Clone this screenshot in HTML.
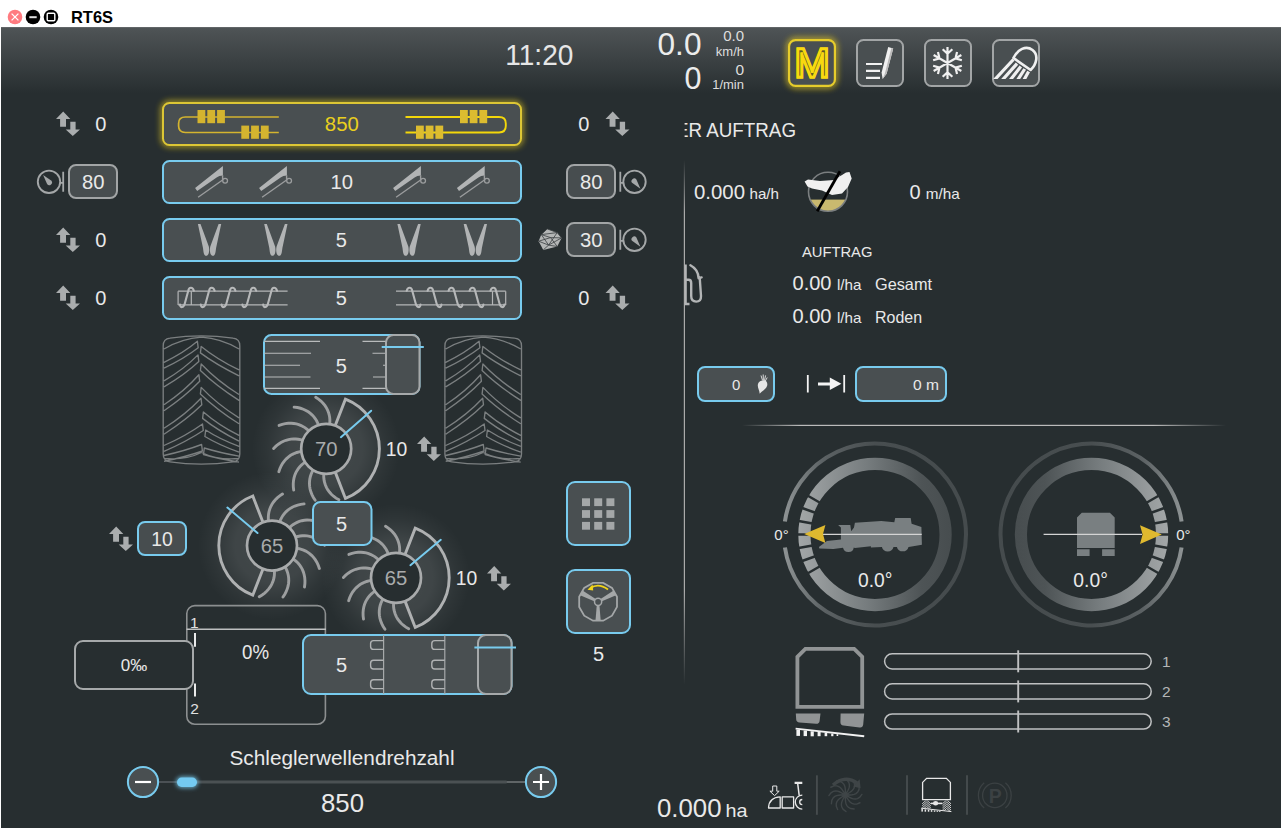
<!DOCTYPE html>
<html lang="de"><head><meta charset="utf-8"><title>RT6S</title>
<style>
html,body{margin:0;padding:0;background:#fff;overflow:hidden}
body{width:1282px;height:829px;position:relative;font-family:"Liberation Sans", sans-serif}
svg{position:absolute;left:0;top:0;display:block}
text{font-family:"Liberation Sans", sans-serif}
</style></head><body>
<svg width="1282" height="829" viewBox="0 0 1282 829">
<defs>
<linearGradient id="hdr" x1="0" y1="0" x2="0" y2="1"><stop offset="0" stop-color="#4f5456"/><stop offset="1" stop-color="#272e30"/></linearGradient>
<filter id="glowY" x="-30%" y="-60%" width="160%" height="220%"><feGaussianBlur stdDeviation="3"/></filter>
<filter id="glowB" x="-40%" y="-80%" width="180%" height="260%"><feGaussianBlur stdDeviation="2"/></filter>
<radialGradient id="tglow"><stop offset="0" stop-color="#fff" stop-opacity="0.13"/><stop offset="0.5" stop-color="#fff" stop-opacity="0.11"/><stop offset="0.8" stop-color="#fff" stop-opacity="0.035"/><stop offset="1" stop-color="#fff" stop-opacity="0"/></radialGradient>
<linearGradient id="vsep" x1="0" y1="0" x2="0" y2="1"><stop offset="0" stop-color="#aaa" stop-opacity="0"/><stop offset="0.1" stop-color="#aaa" stop-opacity="1"/><stop offset="0.82" stop-color="#aaa" stop-opacity="1"/><stop offset="1" stop-color="#aaa" stop-opacity="0"/></linearGradient>
<linearGradient id="hsep" x1="0" y1="0" x2="1" y2="0"><stop offset="0" stop-color="#bbb" stop-opacity="0"/><stop offset="0.12" stop-color="#bbb" stop-opacity="1"/><stop offset="0.85" stop-color="#bbb" stop-opacity="1"/><stop offset="1" stop-color="#bbb" stop-opacity="0"/></linearGradient>
</defs>

<rect x="0" y="0" width="1282" height="829" fill="#fff"/>
<rect x="1" y="27.4" width="1280" height="800.6" fill="#272e30"/>
<rect x="1" y="27.4" width="1280" height="66" fill="url(#hdr)"/>
<circle cx="15" cy="17" r="7.3" fill="#ff7b80"/><path d="M11.6 13.6 L18.4 20.4 M18.4 13.6 L11.6 20.4" stroke="#fff" stroke-width="1.3"/>
<circle cx="33" cy="17" r="7.3" fill="#000"/><rect x="29.3" y="16.2" width="7.4" height="2" fill="#ddd"/>
<circle cx="51" cy="17" r="7.3" fill="#000"/><rect x="47.2" y="13.2" width="7.6" height="7.6" rx="1" fill="none" stroke="#fff" stroke-width="1.4"/>
<text x="71" y="23.3" font-size="16.5" text-anchor="start" fill="#000" font-weight="bold" textLength="42" lengthAdjust="spacingAndGlyphs">RT6S</text>
<text x="539.3" y="65.3" font-size="29.3" text-anchor="middle" fill="#e6e6e6" textLength="68" lengthAdjust="spacingAndGlyphs">11:20</text>
<text x="701.5" y="55.3" font-size="30.5" text-anchor="end" fill="#ececec" textLength="44" lengthAdjust="spacingAndGlyphs">0.0</text>
<text x="701.5" y="88.8" font-size="30.5" text-anchor="end" fill="#ececec">0</text>
<text x="744" y="40.8" font-size="15" text-anchor="end" fill="#dedede">0.0</text>
<text x="744" y="55.6" font-size="13" text-anchor="end" fill="#dedede">km/h</text>
<text x="744" y="74.8" font-size="15.5" text-anchor="end" fill="#dedede">0</text>
<text x="744" y="89.2" font-size="13" text-anchor="end" fill="#dedede">1/min</text>
<rect x="789.1" y="40.1" width="45.8" height="45.8" rx="6.5" fill="none" stroke="#f2d21c" stroke-width="4" filter="url(#glowY)" opacity="0.9"/>
<rect x="789.1" y="40.1" width="45.8" height="45.8" rx="6.5" fill="#494f51" stroke="#e6cc2c" stroke-width="2.2"/>
<g transform="translate(812.1,77.3) scale(1.04,1)"><text x="0" y="0" font-size="40.5" text-anchor="middle" fill="#f7d90f" stroke="#f7d90f" stroke-width="3.3" stroke-linejoin="miter">M</text><text x="0" y="0" font-size="40.5" text-anchor="middle" fill="#5e5a22" stroke="#f7d90f" stroke-width="2.3" stroke-linejoin="miter">M</text></g>
<rect x="857.0" y="40.0" width="46" height="46" rx="6.5" fill="#494f51" stroke="#a2a5a6" stroke-width="2"/>
<rect x="925.0" y="40.0" width="46" height="46" rx="6.5" fill="#494f51" stroke="#a2a5a6" stroke-width="2"/>
<rect x="993.0" y="40.0" width="46" height="46" rx="6.5" fill="#494f51" stroke="#a2a5a6" stroke-width="2"/>
<path d="M866 64 H882 M866 70.9 H880 M866 77.9 H880" stroke="#f2f2f2" stroke-width="2.1"/>
<path d="M888.2 47 L893.2 48.4 L886.6 73.8 L882.6 79 L881.6 72.6 Z" fill="#f0f0f0"/>
<path d="M891.4 47.9 L893.2 48.4 L886.6 73.8 L882.6 79 L885 72.9 Z" fill="#b9b9b9"/>
<path d="M947.5 63.0 L947.50 47.00 M947.50 53.70 L942.67 49.20 M947.50 53.70 L952.33 49.20 M947.5 63.0 L961.36 55.00 M955.55 58.35 L957.04 51.92 M955.55 58.35 L961.87 60.28 M947.5 63.0 L961.36 71.00 M955.55 67.65 L961.87 65.72 M955.55 67.65 L957.04 74.08 M947.5 63.0 L947.50 79.00 M947.50 72.30 L952.33 76.80 M947.50 72.30 L942.67 76.80 M947.5 63.0 L933.64 71.00 M939.45 67.65 L937.96 74.08 M939.45 67.65 L933.13 65.72 M947.5 63.0 L933.64 55.00 M939.45 58.35 L933.13 60.28 M939.45 58.35 L937.96 51.92" stroke="#f0f0f0" stroke-width="2.2" fill="none"/>
<clipPath id="lampclip"><rect x="990" y="40" width="50" height="39"/></clipPath>
<g clip-path="url(#lampclip)" stroke="#f0f0f0" fill="none"><path d="M1013.4 58 L1030.6 70 C1036.5 64.5 1039 55 1032.5 50 C1026 45 1017.5 49.5 1013.4 58 Z" stroke-width="2.6" stroke-linejoin="round"/><path d="M1013.4 59.5 L993.5 81 M1017 63.6 L1001.5 81 M1020.8 66.4 L1009.5 81 M1024.7 69 L1017 81 M1028.6 71.6 L1023.4 81" stroke-width="3.2"/></g>
<rect x="163.2" y="103.2" width="357.6" height="41.6" rx="6" fill="none" stroke="#f2d21c" stroke-width="4" filter="url(#glowY)" opacity="0.85"/>
<rect x="163.0" y="103.0" width="358" height="42" rx="6.5" fill="#494f51" stroke="#dcc635" stroke-width="2"/>
<rect x="163.0" y="161.0" width="358" height="42" rx="6.5" fill="#494f51" stroke="#78cbee" stroke-width="2"/>
<rect x="163.0" y="219.0" width="358" height="42" rx="6.5" fill="#494f51" stroke="#78cbee" stroke-width="2"/>
<rect x="163.0" y="277.0" width="358" height="42" rx="6.5" fill="#494f51" stroke="#78cbee" stroke-width="2"/>
<path d="M278.8 117 H185.4 Q178.6 117 178.6 123.4 V126.1 Q178.6 132.5 185.4 132.5 H278.8" fill="none" stroke="#d4b42f" stroke-width="1.7"/>
<rect x="197.5" y="110" width="7.8" height="13.2" fill="#d4b42f"/>
<rect x="207.3" y="110" width="7.8" height="13.2" fill="#d4b42f"/>
<rect x="217.1" y="110" width="7.8" height="13.2" fill="#d4b42f"/>
<rect x="241.3" y="125.6" width="7.8" height="13.2" fill="#d4b42f"/>
<rect x="251.1" y="125.6" width="7.8" height="13.2" fill="#d4b42f"/>
<rect x="260.9" y="125.6" width="7.8" height="13.2" fill="#d4b42f"/>
<path d="M405.5 117 H499 Q505.8 117 505.8 123.4 V126.1 Q505.8 132.5 499 132.5 H405.5" fill="none" stroke="#f3d70a" stroke-width="1.9"/>
<rect x="460" y="110" width="7.8" height="13.2" fill="#dcbc30"/>
<rect x="469.7" y="110" width="7.8" height="13.2" fill="#dcbc30"/>
<rect x="479.4" y="110" width="7.8" height="13.2" fill="#dcbc30"/>
<rect x="416" y="125.6" width="7.8" height="13.2" fill="#dcbc30"/>
<rect x="425.7" y="125.6" width="7.8" height="13.2" fill="#dcbc30"/>
<rect x="435.4" y="125.6" width="7.8" height="13.2" fill="#dcbc30"/>
<text x="341.8" y="131" font-size="20" text-anchor="middle" fill="#e9cf1e" textLength="34" lengthAdjust="spacingAndGlyphs">850</text>
<g transform="translate(195,166.2)"><path d="M0.1 21.9 L27.9 -0.1 V9.3 Q24 9.6 21.6 11.2 L2.2 24.9 Z" fill="#b2b4b5"/><path d="M3.1 31.1 L27.6 13.8 M27.6 9 V13.6" stroke="#9b9d9e" stroke-width="1.4" fill="none"/><circle cx="30.1" cy="14.6" r="2.4" fill="none" stroke="#9b9d9e" stroke-width="1.3"/></g>
<g transform="translate(259,166.2)"><path d="M0.1 21.9 L27.9 -0.1 V9.3 Q24 9.6 21.6 11.2 L2.2 24.9 Z" fill="#b2b4b5"/><path d="M3.1 31.1 L27.6 13.8 M27.6 9 V13.6" stroke="#9b9d9e" stroke-width="1.4" fill="none"/><circle cx="30.1" cy="14.6" r="2.4" fill="none" stroke="#9b9d9e" stroke-width="1.3"/></g>
<g transform="translate(393,166.2)"><path d="M0.1 21.9 L27.9 -0.1 V9.3 Q24 9.6 21.6 11.2 L2.2 24.9 Z" fill="#b2b4b5"/><path d="M3.1 31.1 L27.6 13.8 M27.6 9 V13.6" stroke="#9b9d9e" stroke-width="1.4" fill="none"/><circle cx="30.1" cy="14.6" r="2.4" fill="none" stroke="#9b9d9e" stroke-width="1.3"/></g>
<g transform="translate(456.8,166.2)"><path d="M0.1 21.9 L27.9 -0.1 V9.3 Q24 9.6 21.6 11.2 L2.2 24.9 Z" fill="#b2b4b5"/><path d="M3.1 31.1 L27.6 13.8 M27.6 9 V13.6" stroke="#9b9d9e" stroke-width="1.4" fill="none"/><circle cx="30.1" cy="14.6" r="2.4" fill="none" stroke="#9b9d9e" stroke-width="1.3"/></g>
<text x="341.8" y="189" font-size="20" text-anchor="middle" fill="#e9e9e9" textLength="22.5" lengthAdjust="spacingAndGlyphs">10</text>
<g transform="translate(197.9,224)" fill="#b2b4b5"><path d="M0 0 L2.6 0 L10.9 22.5 C11.7 25.5 11.5 31.8 8.2 31.8 C5.6 31.8 5.6 27 5.1 24 Z"/><path d="M23.3 0 L20.7 0 L12.4 22.5 C11.6 25.5 11.8 31.8 15.1 31.8 C17.7 31.8 17.7 27 18.2 24 Z"/></g>
<g transform="translate(264.2,224)" fill="#b2b4b5"><path d="M0 0 L2.6 0 L10.9 22.5 C11.7 25.5 11.5 31.8 8.2 31.8 C5.6 31.8 5.6 27 5.1 24 Z"/><path d="M23.3 0 L20.7 0 L12.4 22.5 C11.6 25.5 11.8 31.8 15.1 31.8 C17.7 31.8 17.7 27 18.2 24 Z"/></g>
<g transform="translate(397.4,224)" fill="#b2b4b5"><path d="M0 0 L2.6 0 L10.9 22.5 C11.7 25.5 11.5 31.8 8.2 31.8 C5.6 31.8 5.6 27 5.1 24 Z"/><path d="M23.3 0 L20.7 0 L12.4 22.5 C11.6 25.5 11.8 31.8 15.1 31.8 C17.7 31.8 17.7 27 18.2 24 Z"/></g>
<g transform="translate(463.7,224)" fill="#b2b4b5"><path d="M0 0 L2.6 0 L10.9 22.5 C11.7 25.5 11.5 31.8 8.2 31.8 C5.6 31.8 5.6 27 5.1 24 Z"/><path d="M23.3 0 L20.7 0 L12.4 22.5 C11.6 25.5 11.8 31.8 15.1 31.8 C17.7 31.8 17.7 27 18.2 24 Z"/></g>
<text x="341.3" y="247" font-size="20" text-anchor="middle" fill="#e9e9e9">5</text>
<text x="341.3" y="305" font-size="20" text-anchor="middle" fill="#e9e9e9">5</text>
<path d="M178.1 291.2 H287.6 M178.1 304.9 H287.6" stroke="#b4b6b7" stroke-width="1.2" fill="none"/>
<path d="M178.1 291.2 V304.9 M191.3 291.2 V304.9" stroke="#b4b6b7" stroke-width="1.2"/>
<path d="M396 291.2 H505.7 M396 304.9 H505.7" stroke="#b4b6b7" stroke-width="1.2" fill="none"/>
<path d="M505.7 291.2 V304.9 M492.5 291.2 V304.9" stroke="#b4b6b7" stroke-width="1.2"/>
<path d="M180.0 304.6 C180.3 308.2 183.6 308 184.8 303.5 L188.2 291 C189.0 287 192.6 286.6 193.8 290.8 M200.8 304.6 C201.1 308.2 204.4 308 205.6 303.5 L209.0 291 C209.8 287 213.4 286.6 214.6 290.8 M221.6 304.6 C221.9 308.2 225.2 308 226.4 303.5 L229.8 291 C230.6 287 234.2 286.6 235.4 290.8 M242.4 304.6 C242.7 308.2 246.0 308 247.2 303.5 L250.6 291 C251.4 287 255.0 286.6 256.2 290.8 M263.2 304.6 C263.5 308.2 266.8 308 268.0 303.5 L271.4 291 C272.2 287 275.8 286.6 277.0 290.8 M504.3 304.6 C504.0 308.2 500.7 308 499.5 303.5 L496.1 291 C495.3 287 491.7 286.6 490.5 290.8 M483.4 304.6 C483.1 308.2 479.8 308 478.6 303.5 L475.2 291 C474.4 287 470.8 286.6 469.6 290.8 M462.4 304.6 C462.1 308.2 458.8 308 457.6 303.5 L454.2 291 C453.4 287 449.8 286.6 448.6 290.8 M441.4 304.6 C441.1 308.2 437.8 308 436.6 303.5 L433.2 291 C432.4 287 428.8 286.6 427.6 290.8 M420.5 304.6 C420.2 308.2 416.9 308 415.7 303.5 L412.3 291 C411.5 287 407.9 286.6 406.7 290.8" stroke="#b6b8b9" stroke-width="2.1" fill="none" stroke-linecap="round"/>
<path transform="translate(56,111.6)" fill="#aaadae" d="M7.2 0 L14.3 7.4 H10 V15.2 H4.1 V7.4 H0 Z M14.3 10.2 H19.6 V17.8 H24 L16.8 24.4 L9.7 17.8 H14.3 Z"/>
<text x="100.7" y="131" font-size="20" text-anchor="middle" fill="#e9e9e9">0</text>
<path transform="translate(56,227.6)" fill="#aaadae" d="M7.2 0 L14.3 7.4 H10 V15.2 H4.1 V7.4 H0 Z M14.3 10.2 H19.6 V17.8 H24 L16.8 24.4 L9.7 17.8 H14.3 Z"/>
<text x="100.7" y="247" font-size="20" text-anchor="middle" fill="#e9e9e9">0</text>
<path transform="translate(56,285.6)" fill="#aaadae" d="M7.2 0 L14.3 7.4 H10 V15.2 H4.1 V7.4 H0 Z M14.3 10.2 H19.6 V17.8 H24 L16.8 24.4 L9.7 17.8 H14.3 Z"/>
<text x="100.7" y="305" font-size="20" text-anchor="middle" fill="#e9e9e9">0</text>
<text x="583.7" y="131" font-size="20" text-anchor="middle" fill="#e9e9e9">0</text>
<path transform="translate(605.5,111.6)" fill="#aaadae" d="M7.2 0 L14.3 7.4 H10 V15.2 H4.1 V7.4 H0 Z M14.3 10.2 H19.6 V17.8 H24 L16.8 24.4 L9.7 17.8 H14.3 Z"/>
<text x="583.7" y="305" font-size="20" text-anchor="middle" fill="#e9e9e9">0</text>
<path transform="translate(605.5,285.6)" fill="#aaadae" d="M7.2 0 L14.3 7.4 H10 V15.2 H4.1 V7.4 H0 Z M14.3 10.2 H19.6 V17.8 H24 L16.8 24.4 L9.7 17.8 H14.3 Z"/>
<circle cx="49" cy="181.8" r="11.2" fill="none" stroke="#a4a7a8" stroke-width="1.9"/>
<path d="M43.1 174.9 L51.1 180.5 A2.7 2.7 0 1 1 47.1 184.10000000000002 Z" fill="#a4a7a8"/>
<path d="M63.2 171.8 V191.8 M60.5 182.8 H63.2" stroke="#a4a7a8" stroke-width="1.8" fill="none"/>
<rect x="69.0" y="165.0" width="48" height="33" rx="7" fill="#474d4f" stroke="#a2a5a6" stroke-width="2"/>
<text x="93.2" y="189" font-size="20" text-anchor="middle" fill="#e9e9e9" textLength="22.5" lengthAdjust="spacingAndGlyphs">80</text>
<rect x="567.0" y="165.0" width="48" height="33" rx="7" fill="#474d4f" stroke="#a2a5a6" stroke-width="2"/>
<text x="591.2" y="189" font-size="20" text-anchor="middle" fill="#e9e9e9" textLength="22.5" lengthAdjust="spacingAndGlyphs">80</text>
<circle cx="634.5" cy="181.8" r="11.2" fill="none" stroke="#a4a7a8" stroke-width="1.9"/>
<path d="M628.6 174.9 L636.6 180.5 A2.7 2.7 0 1 1 632.6 184.10000000000002 Z" fill="#a4a7a8" transform="rotate(180 634.5 181.8)"/>
<path d="M620.3 171.8 V191.8 M623.0 182.8 H620.3" stroke="#a4a7a8" stroke-width="1.8" fill="none"/>
<rect x="567.0" y="223.0" width="48" height="33" rx="7" fill="#474d4f" stroke="#a2a5a6" stroke-width="2"/>
<text x="591.2" y="247" font-size="20" text-anchor="middle" fill="#e9e9e9" textLength="22.5" lengthAdjust="spacingAndGlyphs">30</text>
<circle cx="634.5" cy="239.8" r="11.2" fill="none" stroke="#a4a7a8" stroke-width="1.9"/>
<path d="M628.6 232.9 L636.6 238.5 A2.7 2.7 0 1 1 632.6 242.10000000000002 Z" fill="#a4a7a8" transform="rotate(180 634.5 239.8)"/>
<path d="M620.3 229.8 V249.8 M623.0 240.8 H620.3" stroke="#a4a7a8" stroke-width="1.8" fill="none"/>
<g transform="translate(538.6,228.6)"><path d="M8.6 0.3 L18.6 4 L23 9.3 L18.6 17.9 L4.7 21.3 L0 12.6 L2.7 6 Z" fill="#b3b5b5"/><path d="M8.6 0.3 L2.7 6 L18.6 4 L8.6 0.3 M2.7 6 L10 16.5 L18.6 4 L23 9.3 L10 16.5 L4.7 21.3 M0 12.6 L10 16.5 L18.6 17.9 M2.7 6 L12 9 L18.6 17.9 M0 12.6 L12 9 L23 9.3" fill="none" stroke="#3a3f41" stroke-width="0.8"/></g>
<path transform="translate(0,0)" d="M163.2 346 C163.2 340 166 338.6 170 338.2 Q201 333.5 233 338.2 C237 338.6 239.8 340 239.8 346 V454 C239.8 460 237 461.4 233 461.8 Q201 466.5 170 461.8 C166 461.4 163.2 460 163.2 454 Z M164 349 Q182 338.5 201.5 337.2 Q221 338.5 239 349 M164 458.5 Q185 460.5 201.5 452.5 Q218 460.5 239 458.5 M164 362.3 Q183.7 352.9 197.4 341.3 L198.2 347.8 Q184.7 358.3 164 368.2 M164 380.9 Q184.0 369.2 198.0 354.9 L198.8 361.4 Q185.0 374.4 164 386.8 M164 404.8 Q184.4 391.3 198.9 374.8 L199.7 381.3 Q185.4 396.3 164 410.7 M164 428.3 Q185.5 414.8 201.0 398.3 L201.8 404.8 Q186.5 419.8 164 434.2 M164 445.5 Q186.2 435.8 202.5 424.0 L203.3 430.5 Q187.2 441.2 164 451.4 M164 455.5 Q185.8 450.6 201.6 444.5 L202.4 451.0 Q186.8 456.5 164 461.4 M239 369.9 Q217.1 359.3 201.2 346.4 L200.4 352.9 Q216.1 364.6 239 375.8 M239 394.5 Q217.1 380.8 201.2 364.0 L200.4 370.5 Q216.1 385.8 239 400.4 M239 417.9 Q217.1 404.2 201.2 387.4 L200.4 393.9 Q216.1 409.1 239 423.8 M239 435.4 Q218.2 424.8 203.4 411.9 L202.6 418.4 Q217.2 430.1 239 441.2 M239 446.3 Q219.3 439.0 205.7 430.0 L204.9 436.5 Q218.3 444.6 239 452.2 M239 456.2 Q218.7 452.5 204.3 448.0 L203.5 454.5 Q217.7 458.6 239 462.1" fill="none" stroke="#7b7f80" stroke-width="1.35" stroke-linejoin="round"/>
<path transform="translate(281.7,0)" d="M163.2 346 C163.2 340 166 338.6 170 338.2 Q201 333.5 233 338.2 C237 338.6 239.8 340 239.8 346 V454 C239.8 460 237 461.4 233 461.8 Q201 466.5 170 461.8 C166 461.4 163.2 460 163.2 454 Z M164 349 Q182 338.5 201.5 337.2 Q221 338.5 239 349 M164 458.5 Q185 460.5 201.5 452.5 Q218 460.5 239 458.5 M164 362.3 Q183.7 352.9 197.4 341.3 L198.2 347.8 Q184.7 358.3 164 368.2 M164 380.9 Q184.0 369.2 198.0 354.9 L198.8 361.4 Q185.0 374.4 164 386.8 M164 404.8 Q184.4 391.3 198.9 374.8 L199.7 381.3 Q185.4 396.3 164 410.7 M164 428.3 Q185.5 414.8 201.0 398.3 L201.8 404.8 Q186.5 419.8 164 434.2 M164 445.5 Q186.2 435.8 202.5 424.0 L203.3 430.5 Q187.2 441.2 164 451.4 M164 455.5 Q185.8 450.6 201.6 444.5 L202.4 451.0 Q186.8 456.5 164 461.4 M239 369.9 Q217.1 359.3 201.2 346.4 L200.4 352.9 Q216.1 364.6 239 375.8 M239 394.5 Q217.1 380.8 201.2 364.0 L200.4 370.5 Q216.1 385.8 239 400.4 M239 417.9 Q217.1 404.2 201.2 387.4 L200.4 393.9 Q216.1 409.1 239 423.8 M239 435.4 Q218.2 424.8 203.4 411.9 L202.6 418.4 Q217.2 430.1 239 441.2 M239 446.3 Q219.3 439.0 205.7 430.0 L204.9 436.5 Q218.3 444.6 239 452.2 M239 456.2 Q218.7 452.5 204.3 448.0 L203.5 454.5 Q217.7 458.6 239 462.1" fill="none" stroke="#7b7f80" stroke-width="1.35" stroke-linejoin="round"/>
<circle cx="326" cy="448.5" r="74" fill="url(#tglow)"/>
<circle cx="272" cy="545.6" r="74" fill="url(#tglow)"/>
<circle cx="396" cy="577.8" r="74" fill="url(#tglow)"/>
<rect x="264.0" y="335.0" width="155.5" height="59" rx="7.5" fill="#494f51" stroke="#78cbee" stroke-width="2"/>
<path d="M264 341.4 H320 M362.5 341.4 H386 M264 353.3 H311 M372.5 353.3 H386 M264 365.2 H300 M383 365.2 H386 M264 377 H310.5 M373 377 H386 M264 388.4 H320 M362.5 388.4 H386" stroke="#b9bbbc" stroke-width="1.1"/>
<rect x="386.0" y="335.0" width="33.5" height="59" rx="7.5" fill="#494f51" stroke="#a6a9aa" stroke-width="2"/>
<path d="M381.7 347 H423.8" stroke="#78cbee" stroke-width="1.8"/>
<text x="341.3" y="373" font-size="20" text-anchor="middle" fill="#e9e9e9">5</text>
<g transform="translate(326.2,448.8)" fill="none" stroke="#a9abac" stroke-linecap="round" stroke-linejoin="miter"><path d="M3.48 -24.76 L3.66 -27.05 L3.64 -29.37 L3.42 -31.72 L2.97 -34.07 L2.29 -36.43 L1.35 -38.78 L0.14 -41.10 L-1.35 -43.38 L-3.15 -45.59 L-5.27 -47.71 L-7.71 -49.71 L-10.49 -51.54 M-7.75 -23.77 L-8.60 -25.91 L-9.64 -27.99 L-10.87 -29.99 L-12.30 -31.91 L-13.95 -33.73 L-15.83 -35.43 L-17.93 -36.98 L-20.28 -38.37 L-22.87 -39.57 L-25.70 -40.54 L-28.77 -41.26 L-32.07 -41.69 M-17.41 -17.94 L-19.11 -19.50 L-20.95 -20.91 L-22.94 -22.16 L-25.07 -23.26 L-27.35 -24.17 L-29.78 -24.87 L-32.36 -25.34 L-35.08 -25.55 L-37.93 -25.49 L-40.90 -25.12 L-43.98 -24.42 L-47.13 -23.35 M-23.52 -8.46 L-25.73 -9.12 L-28.01 -9.57 L-30.35 -9.83 L-32.74 -9.87 L-35.19 -9.69 L-37.68 -9.25 L-40.20 -8.54 L-42.74 -7.54 L-45.27 -6.23 L-47.78 -4.59 L-50.23 -2.61 L-52.60 -0.27 M-24.85 2.73 L-27.12 3.12 L-29.37 3.71 L-31.58 4.51 L-33.75 5.52 L-35.87 6.77 L-37.91 8.25 L-39.87 10.00 L-41.70 12.01 L-43.40 14.30 L-44.94 16.88 L-46.27 19.73 L-47.36 22.88 M-21.12 13.38 L-22.99 14.72 L-24.75 16.24 L-26.38 17.93 L-27.89 19.79 L-29.24 21.84 L-30.43 24.07 L-31.42 26.50 L-32.18 29.12 L-32.70 31.92 L-32.95 34.91 L-32.89 38.06 L-32.49 41.36 M-13.09 21.30 L-14.18 23.33 L-15.09 25.46 L-15.82 27.70 L-16.35 30.04 L-16.67 32.47 L-16.75 35.00 L-16.57 37.61 L-16.11 40.30 L-15.35 43.05 L-14.26 45.83 L-12.82 48.64 L-11.01 51.44 M-2.40 24.88 L-2.49 27.19 L-2.37 29.51 L-2.04 31.83 L-1.49 34.17 L-0.71 36.49 L0.33 38.80 L1.64 41.07 L3.24 43.28 L5.13 45.41 L7.34 47.44 L9.86 49.32 L12.72 51.04" stroke-width="2.9" stroke="#9d9fa0"/><path d="M9.04 -23.31 L19.24 -49.60 A53.2 53.2 0 0 1 19.24 49.60 L9.04 23.31" stroke-width="2.9" stroke="#afb1b2" stroke-linecap="butt"/><circle cx="0" cy="0" r="25" fill="#272e30" stroke-width="2.7"/><path d="M14.7 -11.6 L45 -38.1" stroke="#78cbee" stroke-width="2"/></g>
<text x="326.2" y="456.0" font-size="20" text-anchor="middle" fill="#a9abac" textLength="22.5" lengthAdjust="spacingAndGlyphs">70</text>
<g transform="translate(272,545.6) scale(-1,1)" fill="none" stroke="#a9abac" stroke-linecap="round" stroke-linejoin="miter"><path d="M3.48 -24.76 L3.66 -27.05 L3.64 -29.37 L3.42 -31.72 L2.97 -34.07 L2.29 -36.43 L1.35 -38.78 L0.14 -41.10 L-1.35 -43.38 L-3.15 -45.59 L-5.27 -47.71 L-7.71 -49.71 L-10.49 -51.54 M-7.75 -23.77 L-8.60 -25.91 L-9.64 -27.99 L-10.87 -29.99 L-12.30 -31.91 L-13.95 -33.73 L-15.83 -35.43 L-17.93 -36.98 L-20.28 -38.37 L-22.87 -39.57 L-25.70 -40.54 L-28.77 -41.26 L-32.07 -41.69 M-17.41 -17.94 L-19.11 -19.50 L-20.95 -20.91 L-22.94 -22.16 L-25.07 -23.26 L-27.35 -24.17 L-29.78 -24.87 L-32.36 -25.34 L-35.08 -25.55 L-37.93 -25.49 L-40.90 -25.12 L-43.98 -24.42 L-47.13 -23.35 M-23.52 -8.46 L-25.73 -9.12 L-28.01 -9.57 L-30.35 -9.83 L-32.74 -9.87 L-35.19 -9.69 L-37.68 -9.25 L-40.20 -8.54 L-42.74 -7.54 L-45.27 -6.23 L-47.78 -4.59 L-50.23 -2.61 L-52.60 -0.27 M-24.85 2.73 L-27.12 3.12 L-29.37 3.71 L-31.58 4.51 L-33.75 5.52 L-35.87 6.77 L-37.91 8.25 L-39.87 10.00 L-41.70 12.01 L-43.40 14.30 L-44.94 16.88 L-46.27 19.73 L-47.36 22.88 M-21.12 13.38 L-22.99 14.72 L-24.75 16.24 L-26.38 17.93 L-27.89 19.79 L-29.24 21.84 L-30.43 24.07 L-31.42 26.50 L-32.18 29.12 L-32.70 31.92 L-32.95 34.91 L-32.89 38.06 L-32.49 41.36 M-13.09 21.30 L-14.18 23.33 L-15.09 25.46 L-15.82 27.70 L-16.35 30.04 L-16.67 32.47 L-16.75 35.00 L-16.57 37.61 L-16.11 40.30 L-15.35 43.05 L-14.26 45.83 L-12.82 48.64 L-11.01 51.44 M-2.40 24.88 L-2.49 27.19 L-2.37 29.51 L-2.04 31.83 L-1.49 34.17 L-0.71 36.49 L0.33 38.80 L1.64 41.07 L3.24 43.28 L5.13 45.41 L7.34 47.44 L9.86 49.32 L12.72 51.04" stroke-width="2.9" stroke="#9d9fa0"/><path d="M9.04 -23.31 L19.24 -49.60 A53.2 53.2 0 0 1 19.24 49.60 L9.04 23.31" stroke-width="2.9" stroke="#afb1b2" stroke-linecap="butt"/><circle cx="0" cy="0" r="25" fill="#272e30" stroke-width="2.7"/><path d="M14.5 -12.6 L44.6 -38" stroke="#78cbee" stroke-width="2"/></g>
<text x="272" y="552.8000000000001" font-size="20" text-anchor="middle" fill="#a9abac" textLength="22.5" lengthAdjust="spacingAndGlyphs">65</text>
<g transform="translate(396,577.8)" fill="none" stroke="#a9abac" stroke-linecap="round" stroke-linejoin="miter"><path d="M3.48 -24.76 L3.66 -27.05 L3.64 -29.37 L3.42 -31.72 L2.97 -34.07 L2.29 -36.43 L1.35 -38.78 L0.14 -41.10 L-1.35 -43.38 L-3.15 -45.59 L-5.27 -47.71 L-7.71 -49.71 L-10.49 -51.54 M-7.75 -23.77 L-8.60 -25.91 L-9.64 -27.99 L-10.87 -29.99 L-12.30 -31.91 L-13.95 -33.73 L-15.83 -35.43 L-17.93 -36.98 L-20.28 -38.37 L-22.87 -39.57 L-25.70 -40.54 L-28.77 -41.26 L-32.07 -41.69 M-17.41 -17.94 L-19.11 -19.50 L-20.95 -20.91 L-22.94 -22.16 L-25.07 -23.26 L-27.35 -24.17 L-29.78 -24.87 L-32.36 -25.34 L-35.08 -25.55 L-37.93 -25.49 L-40.90 -25.12 L-43.98 -24.42 L-47.13 -23.35 M-23.52 -8.46 L-25.73 -9.12 L-28.01 -9.57 L-30.35 -9.83 L-32.74 -9.87 L-35.19 -9.69 L-37.68 -9.25 L-40.20 -8.54 L-42.74 -7.54 L-45.27 -6.23 L-47.78 -4.59 L-50.23 -2.61 L-52.60 -0.27 M-24.85 2.73 L-27.12 3.12 L-29.37 3.71 L-31.58 4.51 L-33.75 5.52 L-35.87 6.77 L-37.91 8.25 L-39.87 10.00 L-41.70 12.01 L-43.40 14.30 L-44.94 16.88 L-46.27 19.73 L-47.36 22.88 M-21.12 13.38 L-22.99 14.72 L-24.75 16.24 L-26.38 17.93 L-27.89 19.79 L-29.24 21.84 L-30.43 24.07 L-31.42 26.50 L-32.18 29.12 L-32.70 31.92 L-32.95 34.91 L-32.89 38.06 L-32.49 41.36 M-13.09 21.30 L-14.18 23.33 L-15.09 25.46 L-15.82 27.70 L-16.35 30.04 L-16.67 32.47 L-16.75 35.00 L-16.57 37.61 L-16.11 40.30 L-15.35 43.05 L-14.26 45.83 L-12.82 48.64 L-11.01 51.44 M-2.40 24.88 L-2.49 27.19 L-2.37 29.51 L-2.04 31.83 L-1.49 34.17 L-0.71 36.49 L0.33 38.80 L1.64 41.07 L3.24 43.28 L5.13 45.41 L7.34 47.44 L9.86 49.32 L12.72 51.04" stroke-width="2.9" stroke="#9d9fa0"/><path d="M9.04 -23.31 L19.24 -49.60 A53.2 53.2 0 0 1 19.24 49.60 L9.04 23.31" stroke-width="2.9" stroke="#afb1b2" stroke-linecap="butt"/><circle cx="0" cy="0" r="25" fill="#272e30" stroke-width="2.7"/><path d="M14.4 -12.6 L44.8 -38" stroke="#78cbee" stroke-width="2"/></g>
<text x="396" y="585.0" font-size="20" text-anchor="middle" fill="#a9abac" textLength="22.5" lengthAdjust="spacingAndGlyphs">65</text>
<text x="396.5" y="455.8" font-size="20" text-anchor="middle" fill="#e9e9e9" textLength="21.5" lengthAdjust="spacingAndGlyphs">10</text>
<path transform="translate(417,436.5)" fill="#aaadae" d="M7.2 0 L14.3 7.4 H10 V15.2 H4.1 V7.4 H0 Z M14.3 10.2 H19.6 V17.8 H24 L16.8 24.4 L9.7 17.8 H14.3 Z"/>
<text x="466.5" y="585.2" font-size="20" text-anchor="middle" fill="#e9e9e9" textLength="21.5" lengthAdjust="spacingAndGlyphs">10</text>
<path transform="translate(487,566)" fill="#aaadae" d="M7.2 0 L14.3 7.4 H10 V15.2 H4.1 V7.4 H0 Z M14.3 10.2 H19.6 V17.8 H24 L16.8 24.4 L9.7 17.8 H14.3 Z"/>
<path transform="translate(109,526.6)" fill="#aaadae" d="M7.2 0 L14.3 7.4 H10 V15.2 H4.1 V7.4 H0 Z M14.3 10.2 H19.6 V17.8 H24 L16.8 24.4 L9.7 17.8 H14.3 Z"/>
<rect x="138.0" y="522.0" width="48" height="33" rx="7" fill="#474d4f" stroke="#78cbee" stroke-width="2"/>
<text x="162" y="546" font-size="20" text-anchor="middle" fill="#e9e9e9" textLength="21.5" lengthAdjust="spacingAndGlyphs">10</text>
<rect x="313.0" y="502.0" width="58.5" height="43" rx="7.5" fill="#494f51" stroke="#78cbee" stroke-width="2"/>
<text x="341.5" y="531" font-size="20" text-anchor="middle" fill="#e9e9e9">5</text>
<rect x="567.0" y="482.0" width="63" height="63" rx="8" fill="#494f51" stroke="#78cbee" stroke-width="2"/>
<rect x="582.0" y="498.3" width="8" height="7.8" fill="#a4a7a8"/>
<rect x="582.0" y="510.1" width="8" height="7.8" fill="#a4a7a8"/>
<rect x="582.0" y="521.9" width="8" height="7.8" fill="#a4a7a8"/>
<rect x="594.2" y="498.3" width="8" height="7.8" fill="#a4a7a8"/>
<rect x="594.2" y="510.1" width="8" height="7.8" fill="#a4a7a8"/>
<rect x="594.2" y="521.9" width="8" height="7.8" fill="#a4a7a8"/>
<rect x="606.4" y="498.3" width="8" height="7.8" fill="#a4a7a8"/>
<rect x="606.4" y="510.1" width="8" height="7.8" fill="#a4a7a8"/>
<rect x="606.4" y="521.9" width="8" height="7.8" fill="#a4a7a8"/>
<rect x="567.0" y="570.0" width="63" height="63" rx="8" fill="#494f51" stroke="#78cbee" stroke-width="2"/>
<polygon points="617.0 606.9 612.0 615.7 603.2 620.7 593.0 620.7 584.2 615.7 579.2 606.9 579.2 596.7 584.2 587.9 593.0 582.9 603.2 582.9 612.0 587.9 617.0 596.7" fill="none" stroke="#a4a7a8" stroke-width="1.8"/>
<g transform="translate(598.1,601.8)" fill="#a4a7a8" stroke="none"><path d="M-1.3 3 L1.3 3 L2.6 19 L-2.6 19 Z"/><path d="M-1.3 3 L1.3 3 L2.6 19 L-2.6 19 Z" transform="rotate(118)"/><path d="M-1.3 3 L1.3 3 L2.6 19 L-2.6 19 Z" transform="rotate(-118)"/><circle cx="0" cy="0" r="3.6" fill="#494f51" stroke="#a4a7a8" stroke-width="1.5"/></g>
<path d="M608 589.5 Q598.5 582.5 590.5 588" fill="none" stroke="#f2d418" stroke-width="1.8"/><path d="M587.5 589.8 L592.6 584.6 L593.2 590.6 Z" fill="#f2d418"/>
<text x="598.6" y="661" font-size="20" text-anchor="middle" fill="#e9e9e9">5</text>
<rect x="186.8" y="605.6" width="138.6" height="118.6" rx="8" fill="none" stroke="#8c8f90" stroke-width="1.6"/>
<path d="M186.5 629.3 H326" stroke="#bdbfc0" stroke-width="1.6"/>
<text x="194.2" y="627.8" font-size="15.5" text-anchor="middle" fill="#e0e0e0">1</text>
<text x="194.6" y="714" font-size="15.5" text-anchor="middle" fill="#e0e0e0">2</text>
<path d="M195 633 V646.8 M195 683.4 V696.6" stroke="#fff" stroke-width="1.8"/>
<rect x="75.0" y="641.0" width="118" height="48" rx="8" fill="#272e30" stroke="#a6a9aa" stroke-width="2"/>
<text x="134" y="671.2" font-size="17" text-anchor="middle" fill="#e9e9e9">0‰</text>
<text x="255.6" y="659.4" font-size="20" text-anchor="middle" fill="#e9e9e9" textLength="27" lengthAdjust="spacingAndGlyphs">0%</text>
<rect x="303.0" y="635.0" width="208.5" height="59" rx="8" fill="#494f51" stroke="#78cbee" stroke-width="2"/>
<path d="M383.6 635 V694 M444.8 635 V694" stroke="#a6a9aa" stroke-width="1.2"/>
<path d="M383.6 640.6 H373.6 A3 3 0 0 0 370.6 643.6 V646.4 A3 3 0 0 0 373.6 649.4 H383.6 M383.6 660.2 H373.6 A3 3 0 0 0 370.6 663.2 V666.0 A3 3 0 0 0 373.6 669.0 H383.6 M383.6 679.8000000000001 H373.6 A3 3 0 0 0 370.6 682.8000000000001 V685.6 A3 3 0 0 0 373.6 688.6 H383.6 M444.8 640.6 H434.8 A3 3 0 0 0 431.8 643.6 V646.4 A3 3 0 0 0 434.8 649.4 H444.8 M444.8 660.2 H434.8 A3 3 0 0 0 431.8 663.2 V666.0 A3 3 0 0 0 434.8 669.0 H444.8 M444.8 679.8000000000001 H434.8 A3 3 0 0 0 431.8 682.8000000000001 V685.6 A3 3 0 0 0 434.8 688.6 H444.8" fill="none" stroke="#b0b2b3" stroke-width="1.4"/>
<rect x="478.0" y="635.0" width="33.5" height="59" rx="8" fill="#494f51" stroke="#a6a9aa" stroke-width="2"/>
<path d="M474.4 647.5 H516" stroke="#78cbee" stroke-width="1.8"/>
<text x="341.5" y="672.3" font-size="20" text-anchor="middle" fill="#e9e9e9">5</text>
<text x="342" y="765.2" font-size="20" text-anchor="middle" fill="#e9e9e9" textLength="225" lengthAdjust="spacingAndGlyphs">Schleglerwellendrehzahl</text>
<path d="M159 782 H178" stroke="#70757a" stroke-width="1"/>
<path d="M196 782 H506.6" stroke="#4b5153" stroke-width="3.2"/>
<path d="M506.6 782 H525" stroke="#9a9d9e" stroke-width="1"/>
<rect x="176" y="776.5" width="22" height="11.5" rx="5.7" fill="#78cbee" filter="url(#glowB)" opacity="0.8"/>
<rect x="177" y="777.6" width="20" height="9.4" rx="4.7" fill="#74caf1"/>
<circle cx="143" cy="782" r="15.1" fill="#494f51" stroke="#78cbee" stroke-width="2"/><path d="M135 782 H151" stroke="#fff" stroke-width="2.2"/>
<circle cx="541" cy="782" r="15.1" fill="#494f51" stroke="#78cbee" stroke-width="2"/><path d="M533 782 H549 M541 774 V790" stroke="#fff" stroke-width="2.2"/>
<text x="342.5" y="811.8" font-size="26" text-anchor="middle" fill="#e9e9e9" textLength="43" lengthAdjust="spacingAndGlyphs">850</text>
<rect x="683.8" y="160" width="1.2" height="525" fill="url(#vsep)"/>
<clipPath id="rclip"><rect x="684.6" y="100" width="600" height="700"/></clipPath>
<g clip-path="url(#rclip)">
<text x="796" y="137" font-size="19.6" text-anchor="end" fill="#e9e9e9" textLength="120" lengthAdjust="spacingAndGlyphs">ER AUFTRAG</text>
<path d="M685.6 264.6 V304.6 M684 304 H689.5" stroke="#b3b5b6" stroke-width="2.4" fill="none"/>
<path d="M686 279.8 H688.5 Q691.2 279.8 691.2 283 V296 Q691.2 301.6 696.2 301.6 Q701.2 301.6 701 296 L699.7 277.5 M701.6 277.4 L698.6 278.2 Q698.4 269.5 690.4 265.2" stroke="#b3b5b6" stroke-width="2.4" stroke-linecap="round" fill="none" stroke-linejoin="round"/>
</g>
<text x="694" y="198.8" font-size="20" text-anchor="start" fill="#e9e9e9" textLength="51" lengthAdjust="spacingAndGlyphs">0.000</text>
<text x="749.5" y="198.8" font-size="14.5" text-anchor="start" fill="#e9e9e9" textLength="29.5" lengthAdjust="spacingAndGlyphs">ha/h</text>
<text x="920.5" y="198.8" font-size="20" text-anchor="end" fill="#e9e9e9">0</text>
<text x="925.8" y="198.8" font-size="14.5" text-anchor="start" fill="#e9e9e9" textLength="34" lengthAdjust="spacingAndGlyphs">m/ha</text>
<clipPath id="fclip"><circle cx="828" cy="191.8" r="19.3"/></clipPath>
<rect x="805" y="199.6" width="46" height="14" fill="#c9b96f" clip-path="url(#fclip)"/>
<circle cx="828" cy="191.8" r="19.5" fill="none" stroke="#7b7f80" stroke-width="1.6"/>
<path d="M804.6 181.5 L808 179.5 L820 181 L834 180 L846 172.5 L849.5 172 L851.7 178.5 L848 187 L842 193.5 L832 195 L822 190.5 L812 188.5 L807.5 186.5 Z" fill="#f0f0f0"/>
<path d="M817.2 211.2 L840 171.2" stroke="#000" stroke-width="2.8"/>
<text x="837.2" y="257" font-size="15" text-anchor="middle" fill="#e9e9e9" textLength="70.5" lengthAdjust="spacingAndGlyphs">AUFTRAG</text>
<text x="792.5" y="290" font-size="20" text-anchor="start" fill="#e9e9e9" textLength="39" lengthAdjust="spacingAndGlyphs">0.00</text>
<text x="837" y="290" font-size="14.5" text-anchor="start" fill="#e9e9e9" textLength="24.5" lengthAdjust="spacingAndGlyphs">l/ha</text>
<text x="875" y="290" font-size="16.5" text-anchor="start" fill="#e9e9e9" textLength="57" lengthAdjust="spacingAndGlyphs">Gesamt</text>
<text x="792.5" y="323" font-size="20" text-anchor="start" fill="#e9e9e9" textLength="39" lengthAdjust="spacingAndGlyphs">0.00</text>
<text x="837" y="323" font-size="14.5" text-anchor="start" fill="#e9e9e9" textLength="24.5" lengthAdjust="spacingAndGlyphs">l/ha</text>
<text x="875" y="323" font-size="16.5" text-anchor="start" fill="#e9e9e9" textLength="47" lengthAdjust="spacingAndGlyphs">Roden</text>
<rect x="698.0" y="367.0" width="76" height="34" rx="7" fill="#494f51" stroke="#78cbee" stroke-width="2"/>
<text x="736.2" y="390.4" font-size="15" text-anchor="middle" fill="#e9e9e9">0</text>
<path d="M762.6 380.5 C766 379.5 767.8 382.5 767.2 385.5 C766.5 389 762 391 759.6 393.7 C759.8 390.5 757 387 758 384 C758.6 381.8 760.5 380.8 762.6 380.5 Z" fill="#e6e6e6"/><path d="M762.6 380.5 L761 375.5 M763.4 380.5 L763.2 374.5 M764.4 380.8 L765.6 375.4 M765.2 381.3 L767.2 377.5" stroke="#e6e6e6" stroke-width="0.9" fill="none"/>
<path d="M807.8 375 V392.6 M844.2 375 V392.6" stroke="#f4f4f4" stroke-width="1.8"/>
<path d="M818 382.4 H829.8 V377.6 L841.4 383.8 L829.8 390 V385.4 H818 Z" fill="#f4f4f4"/>
<rect x="856.0" y="367.0" width="90" height="34" rx="7" fill="#494f51" stroke="#78cbee" stroke-width="2"/>
<text x="939" y="390.4" font-size="15" text-anchor="end" fill="#e9e9e9" textLength="26" lengthAdjust="spacingAndGlyphs">0 m</text>
<rect x="742" y="424.8" width="484" height="1.2" fill="url(#hsep)"/>
<linearGradient id="ringL" gradientUnits="userSpaceOnUse" x1="-77" y1="0" x2="77" y2="0"><stop offset="0" stop-color="#a3a7a8"/><stop offset="0.45" stop-color="#767c7e"/><stop offset="0.8" stop-color="#4e5456"/><stop offset="1" stop-color="#474d4f"/></linearGradient>
<linearGradient id="oringL" gradientUnits="userSpaceOnUse" x1="-92" y1="0" x2="92" y2="0"><stop offset="0" stop-color="#8f9495"/><stop offset="0.22" stop-color="#5c6264"/><stop offset="0.5" stop-color="#484e50"/><stop offset="1" stop-color="#454b4d"/></linearGradient>
<g transform="translate(875,534.5)">
<path d="M-90.07 -12.98 A91 91 0 1 1 -90.07 12.98" fill="none" stroke="url(#oringL)" stroke-width="4"/>
<circle cx="0" cy="0" r="70.6" fill="none" stroke="url(#ringL)" stroke-width="12.2"/>
<path d="M-53.69 31.00 L-68.42 39.50 M-58.26 21.21 L-74.24 27.02 M-61.06 10.77 L-77.80 13.72 M-62.00 0.00 L-79.00 0.00 M-61.06 -10.77 L-77.80 -13.72 M-58.26 -21.21 L-74.24 -27.02 M-53.69 -31.00 L-68.42 -39.50" stroke="#272e30" stroke-width="2.5"/>
</g>
<g transform="translate(1091.5,534.5) scale(-1,1)">
<path d="M-90.07 -12.98 A91 91 0 1 1 -90.07 12.98" fill="none" stroke="url(#oringL)" stroke-width="4"/>
<circle cx="0" cy="0" r="70.6" fill="none" stroke="url(#ringL)" stroke-width="12.2"/>
<path d="M-53.69 31.00 L-68.42 39.50 M-58.26 21.21 L-74.24 27.02 M-61.06 10.77 L-77.80 13.72 M-62.00 0.00 L-79.00 0.00 M-61.06 -10.77 L-77.80 -13.72 M-58.26 -21.21 L-74.24 -27.02 M-53.69 -31.00 L-68.42 -39.50" stroke="#272e30" stroke-width="2.5"/>
</g>
<path fill="#797f81" d="M838.1 525.1 L850.3 525.1 L851.2 531.2 L854 527.5 L854.9 522.8 L873.7 521.4 L881.2 520.9 L894.3 522.3 L895.2 518.1 L910.7 518.1 L911.6 523.7 L921.4 527 L921.9 544.8 L910.2 546.7 L908.5 546.9 A6 6 0 0 1 896.9 546.9 L893.5 547 A6 6 0 0 1 881.9 547 L870.9 547.6 L870.9 546.2 L854.9 548 L853.8 547.4 A5.5 5.5 0 0 1 843 547.8 L833.4 549 L819.4 548.5 L818.9 547.1 L826.9 541 L840.9 539.6 L840.9 527.5 Z"/>
<path d="M822 534.3 H921.7" stroke="#d4d4d4" stroke-width="1.2"/>
<path d="M804.2 534 L825.4 525.1 L823 534 L825.4 543 Z" fill="#dfb92f"/>
<text x="781.5" y="539.8" font-size="15" text-anchor="middle" fill="#e9e9e9">0°</text>
<text x="875.3" y="587" font-size="20" text-anchor="middle" fill="#e9e9e9" textLength="34.5" lengthAdjust="spacingAndGlyphs">0.0°</text>
<path fill="#797f81" d="M1081.8 512.8 H1109.9 L1114.7 517.6 V548.1 H1077 V517.6 Z M1077 549.2 H1089.6 V556 H1077 Z M1102.1 549.2 H1114.7 V556 H1102.1 Z"/>
<path d="M1043.6 534.4 H1142" stroke="#d4d4d4" stroke-width="1.2"/>
<path d="M1161.8 534.4 L1140 525.2 L1142.6 534.4 L1140 544 Z" fill="#dfb92f"/>
<text x="1183.3" y="539.8" font-size="15" text-anchor="middle" fill="#e9e9e9">0°</text>
<text x="1090.6" y="587" font-size="20" text-anchor="middle" fill="#e9e9e9" textLength="34.5" lengthAdjust="spacingAndGlyphs">0.0°</text>
<path d="M805.4 648.8 H854.2 L862.2 656.8 V706.8 H797.4 V656.8 Z" fill="none" stroke="#919495" stroke-width="3.8" stroke-linejoin="miter"/>
<path d="M795.8 713.4 H820.5 L819.6 721 Q819.2 724 816 723.8 L799.5 722.6 Q796.4 722.2 796.2 719.5 Z M840.6 713.4 H864.2 L863.2 724.5 Q862.8 727.8 859.6 727.4 L843.4 725.6 Q840.4 725.2 840.4 722 Z" fill="#919495"/>
<path d="M795.6 728.6 L864.2 736.2" stroke="#f2f2f2" stroke-width="1.9"/>
<rect x="796.4" y="729.7" width="3.6" height="6.2" fill="#f2f2f2"/><rect x="803.6" y="730.5" width="3.4" height="5.6" fill="#f2f2f2"/><rect x="810.6" y="731.3" width="3.2" height="5" fill="#f2f2f2"/><rect x="817.6" y="732.0" width="3" height="4.2" fill="#f2f2f2"/><rect x="824.6" y="732.8" width="2.6" height="3.4" fill="#f2f2f2"/><rect x="831.2" y="733.6" width="2.2" height="2.6" fill="#f2f2f2"/><rect x="836.6" y="734.2" width="1.6" height="1.8" fill="#f2f2f2"/>
<rect x="884.6" y="653.6999999999999" width="266.6" height="15.2" rx="7.6" fill="none" stroke="#bfc1c2" stroke-width="1.5"/>
<path d="M1018.2 650.3 V672.3" stroke="#bfc1c2" stroke-width="1.9"/>
<text x="1166.4" y="666.9" font-size="15.5" text-anchor="middle" fill="#b4b6b7">1</text>
<rect x="884.6" y="683.8" width="266.6" height="15.2" rx="7.6" fill="none" stroke="#bfc1c2" stroke-width="1.5"/>
<path d="M1018.2 680.4 V702.4" stroke="#bfc1c2" stroke-width="1.9"/>
<text x="1166.4" y="697.0" font-size="15.5" text-anchor="middle" fill="#b4b6b7">2</text>
<rect x="884.6" y="713.9" width="266.6" height="15.2" rx="7.6" fill="none" stroke="#bfc1c2" stroke-width="1.5"/>
<path d="M1018.2 710.5 V732.5" stroke="#bfc1c2" stroke-width="1.9"/>
<text x="1166.4" y="727.1" font-size="15.5" text-anchor="middle" fill="#b4b6b7">3</text>
<text x="657" y="817.3" font-size="25.5" text-anchor="start" fill="#e9e9e9" textLength="64.5" lengthAdjust="spacingAndGlyphs">0.000</text>
<text x="725.5" y="817.3" font-size="19" text-anchor="start" fill="#e9e9e9" textLength="22" lengthAdjust="spacingAndGlyphs">ha</text>
<clipPath id="wclip"><rect x="760" y="775" width="42.3" height="40"/></clipPath>
<g clip-path="url(#wclip)" fill="none" stroke="#e8e8e8" stroke-width="1.3" stroke-linejoin="round"><path d="M772.7 786 H776.8 V791.2 H779.2 L774.6 795.6 L769.9 791.2 H772.7 Z" stroke-width="1"/><path d="M768.5 808 Q769 797.4 780.2 796.9 V808 Z"/><rect x="782.2" y="796.9" width="11.4" height="11.1"/><circle cx="802.3" cy="802.1" r="7"/><circle cx="802.3" cy="802.1" r="2.6"/><path d="M794.6 782.9 H803" stroke-width="2.4"/><path d="M797.6 783 L799.2 795.4" stroke-width="1.5"/></g>
<path d="M816.9 775.3 V814.8" stroke="#464c4e" stroke-width="1.9"/>
<path d="M907 775.3 V814.8" stroke="#464c4e" stroke-width="1.9"/>
<path d="M967 775.3 V814.8" stroke="#464c4e" stroke-width="1.9"/>
<path d="M846.40 795.00 L848.34 795.00 L850.27 794.96 L852.21 794.80 L854.13 794.39 L855.99 793.55 L857.68 792.05 L858.96 789.68 L859.39 786.26 M846.27 795.50 L847.95 796.47 L849.64 797.40 L851.40 798.23 L853.26 798.84 L855.30 799.04 L857.51 798.59 L859.80 797.17 L861.89 794.42 M845.90 795.87 L846.87 797.54 L847.87 799.20 L848.98 800.80 L850.29 802.25 L851.95 803.44 L854.09 804.16 L856.79 804.08 L859.97 802.75 M845.40 796.00 L845.40 797.94 L845.44 799.87 L845.60 801.81 L846.01 803.73 L846.85 805.59 L848.35 807.28 L850.72 808.56 L854.14 808.99 M844.90 795.87 L843.93 797.55 L843.00 799.24 L842.17 801.00 L841.56 802.86 L841.36 804.90 L841.81 807.11 L843.23 809.40 L845.98 811.49 M844.53 795.50 L842.86 796.47 L841.20 797.47 L839.60 798.58 L838.15 799.89 L836.96 801.55 L836.24 803.69 L836.32 806.39 L837.65 809.57 M844.40 795.00 L842.46 795.00 L840.53 795.04 L838.59 795.20 L836.67 795.61 L834.81 796.45 L833.12 797.95 L831.84 800.32 L831.41 803.74 M844.53 794.50 L842.85 793.53 L841.16 792.60 L839.40 791.77 L837.54 791.16 L835.50 790.96 L833.29 791.41 L831.00 792.83 L828.91 795.58 M844.90 794.13 L843.93 792.46 L842.93 790.80 L841.82 789.20 L840.51 787.75 L838.85 786.56 L836.71 785.84 L834.01 785.92 L830.83 787.25 M845.40 794.00 L845.40 792.06 L845.36 790.13 L845.20 788.19 L844.79 786.27 L843.95 784.41 L842.45 782.72 L840.08 781.44 L836.66 781.01 M845.90 794.13 L846.87 792.45 L847.80 790.76 L848.63 789.00 L849.24 787.14 L849.44 785.10 L848.99 782.89 L847.57 780.60 L844.82 778.51 M846.27 794.50 L847.94 793.53 L849.60 792.53 L851.20 791.42 L852.65 790.11 L853.84 788.45 L854.56 786.31 L854.48 783.61 L853.15 780.43" fill="none" stroke="#3f4547" stroke-width="1.4" stroke-linecap="round"/>
<circle cx="845.4" cy="795" r="2.4" fill="#3f4547"/>
<path d="M833 785 Q845 774.5 857 783" fill="none" stroke="#3f4547" stroke-width="3.4"/><path d="M860.6 788.2 L853.2 786.4 L859.6 779.2 Z" fill="#3f4547"/>
<path d="M922.6 799.6 V782.4 L926.6 778.4 H946.4 L950.4 782.4 V799.6 Z" fill="none" stroke="#e8e8e8" stroke-width="1.3"/>
<clipPath id="tyclip"><path d="M921.6 800.4 H931 V809.2 L921.6 808.2 Z M942.2 800.4 H951 V811.4 L942.2 810.4 Z"/></clipPath>
<path d="M922.2 803.8 L926.5 800.0 L930.8 803.8 M922.2 805.9 L926.5 802.1 L930.8 805.9 M922.2 808.0 L926.5 804.2 L930.8 808.0 M922.2 810.1 L926.5 806.3 L930.8 810.1 M922.2 812.2 L926.5 808.4 L930.8 812.2 M942.4 803.8 L946.7 800.0 L951.0 803.8 M942.4 805.9 L946.7 802.1 L951.0 805.9 M942.4 808.0 L946.7 804.2 L951.0 808.0 M942.4 810.1 L946.7 806.3 L951.0 810.1 M942.4 812.2 L946.7 808.4 L951.0 812.2" fill="none" stroke="#e8e8e8" stroke-width="0.9" clip-path="url(#tyclip)"/>
<path d="M930.8 803.4 H942.4" stroke="#e8e8e8" stroke-width="1.6"/><ellipse cx="935.6" cy="803.2" rx="2.6" ry="2.2" fill="#e8e8e8"/>
<path d="M921 808.2 L951.4 811.6" stroke="#e8e8e8" stroke-width="1"/>
<rect x="921.4" y="809.0" width="1.5" height="2.6" fill="#e8e8e8"/>
<rect x="924.6" y="809.4" width="1.5" height="2.3" fill="#e8e8e8"/>
<rect x="927.8" y="809.7" width="1.5" height="2" fill="#e8e8e8"/>
<rect x="930.8" y="810.1" width="1.5" height="1.7" fill="#e8e8e8"/>
<rect x="933.8" y="810.4" width="1.5" height="1.4" fill="#e8e8e8"/>
<rect x="936.6" y="810.7" width="1.5" height="1.1" fill="#e8e8e8"/>
<rect x="939" y="811.0" width="1.5" height="0.8" fill="#e8e8e8"/>
<circle cx="994.8" cy="795.4" r="12.2" fill="none" stroke="#3b4143" stroke-width="1.3"/>
<path d="M984.2 782.8 A16.6 16.6 0 0 0 984.2 808 M1005.4 782.8 A16.6 16.6 0 0 1 1005.4 808" fill="none" stroke="#3b4143" stroke-width="1.3"/>
<text x="995.2" y="802.6" font-size="19.5" text-anchor="middle" fill="#3b4143" font-weight="bold">P</text>
</svg></body></html>
